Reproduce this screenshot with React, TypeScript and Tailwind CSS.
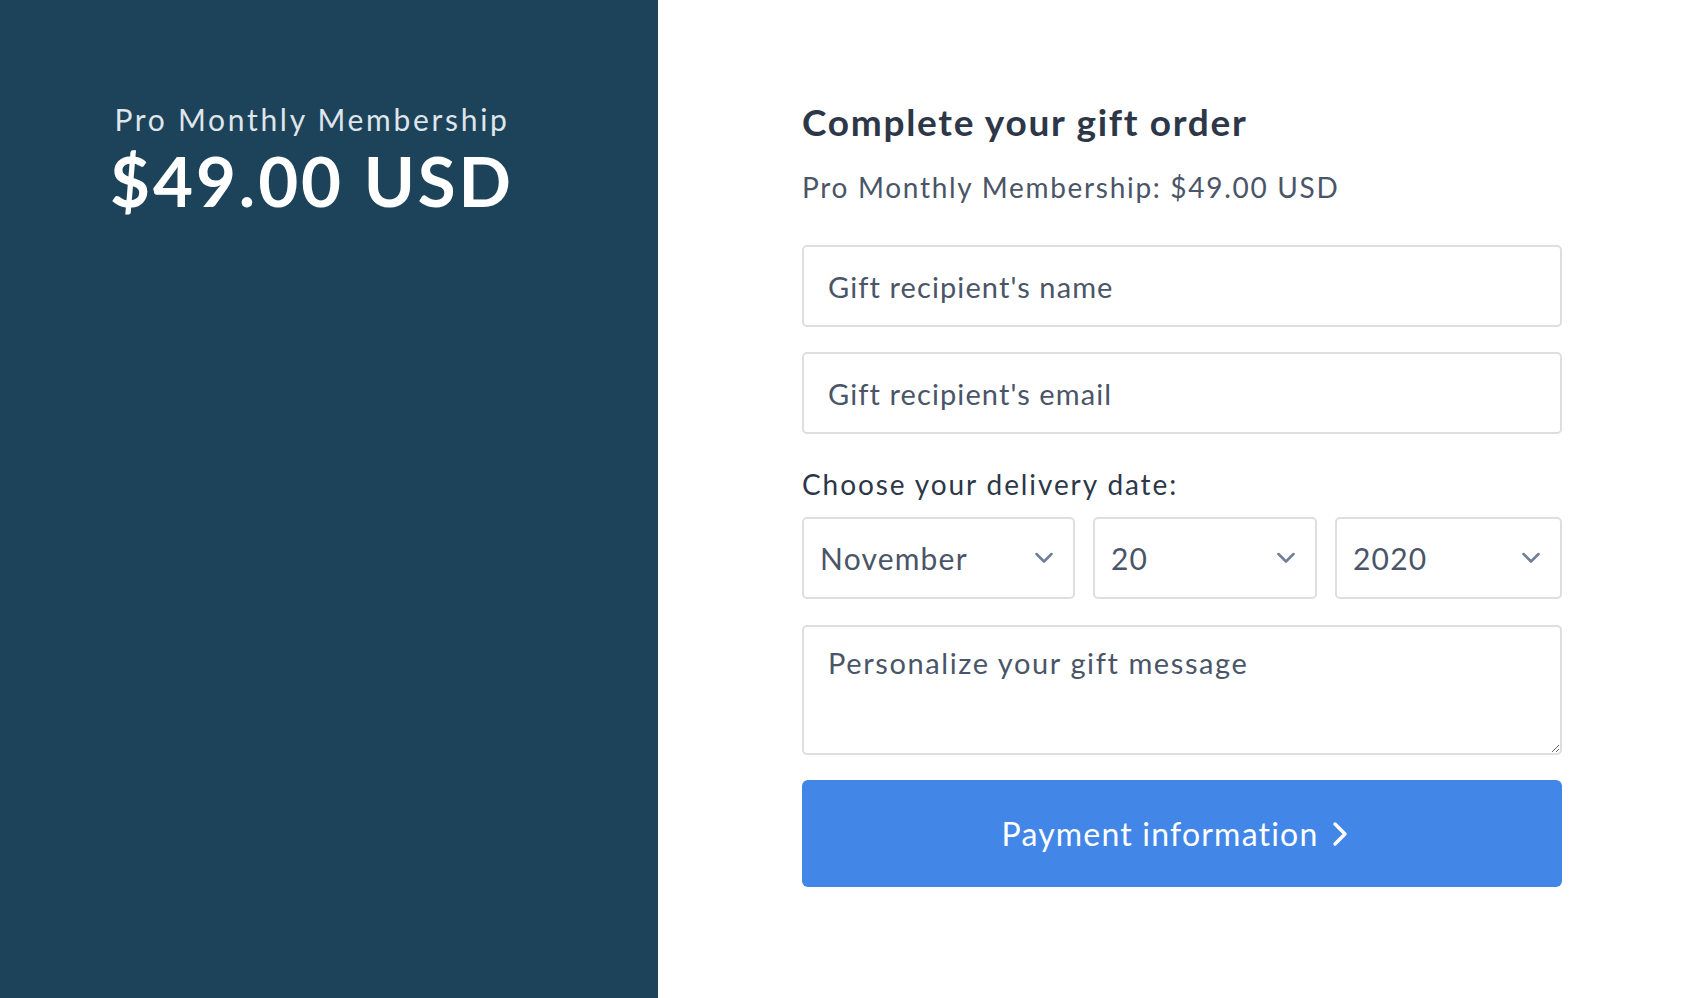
import { ChangeEvent, useState } from "react";

const months = [
  "January",
  "February",
  "March",
  "April",
  "May",
  "June",
  "July",
  "August",
  "September",
  "October",
  "November",
  "December",
];

const days = Array.from({ length: 31 }, (_, i) => String(i + 1));
const years = ["2020", "2021", "2022"];

function SelectChevron() {
  return (
    <svg
      width="18"
      height="11"
      viewBox="0 0 18 11"
      fill="none"
      className="pointer-events-none absolute right-[22px] top-1/2 -translate-y-1/2"
    >
      <polyline
        points="1.5,1.5 9,9 16.5,1.5"
        stroke="#718096"
        strokeWidth="2.6"
        strokeLinecap="round"
        strokeLinejoin="round"
      />
    </svg>
  );
}

function DateSelect({
  value,
  options,
  onChange,
  className,
}: {
  value: string;
  options: string[];
  onChange: (e: ChangeEvent<HTMLSelectElement>) => void;
  className: string;
}) {
  return (
    <div className={`relative ${className}`}>
      <select
        value={value}
        onChange={onChange}
        className="h-[82px] w-full appearance-none rounded-[5px] border-2 border-[#dedede] bg-white pl-[16px] pr-[48px] text-[30px] tracking-[1.2px] text-[#4a5568] outline-none"
      >
        {options.map((o) => (
          <option key={o} value={o}>
            {o}
          </option>
        ))}
      </select>
      <SelectChevron />
    </div>
  );
}

export default function App() {
  const [month, setMonth] = useState("November");
  const [day, setDay] = useState("20");
  const [year, setYear] = useState("2020");

  return (
    <div className="flex min-h-screen w-full font-['Lato',sans-serif]">
      <aside className="w-[658px] shrink-0 bg-[#1c4359] pl-[96px] pr-[130px] pt-[101px] text-center">
        <p className="text-[30px] leading-[36px] tracking-[2.7px] text-[#dfe5ea]">
          Pro Monthly Membership
        </p>
        <p className="mt-[8px] text-[69px] font-bold leading-[72px] tracking-[2.9px] text-white">
          $49.00 USD
        </p>
      </aside>

      <main className="flex-1 bg-white">
        <form
          className="ml-[144px] w-[760px] pt-[100px]"
          onSubmit={(e) => e.preventDefault()}
        >
          <h1 className="text-[37px] font-bold leading-[44px] tracking-[1.7px] text-[#2d3748]">
            Complete your gift order
          </h1>
          <p className="mt-[25px] text-[28px] leading-[36px] tracking-[1.7px] text-[#4a5568]">
            Pro Monthly Membership: $49.00 USD
          </p>

          <input
            type="text"
            placeholder="Gift recipient's name"
            className="mt-[40px] block h-[82px] w-full rounded-[5px] border-2 border-[#dedede] px-[24px] text-[29px] tracking-[1.1px] text-[#4a5568] outline-none placeholder:text-[#4a5568]"
          />
          <input
            type="email"
            placeholder="Gift recipient's email"
            className="mt-[25px] block h-[82px] w-full rounded-[5px] border-2 border-[#dedede] px-[24px] text-[29px] tracking-[1.1px] text-[#4a5568] outline-none placeholder:text-[#4a5568]"
          />

          <p className="mt-[32px] text-[28px] leading-[36px] tracking-[1.9px] text-[#2d3748]">
            Choose your delivery date:
          </p>
          <div className="mt-[15px] flex gap-[18px]">
            <DateSelect
              value={month}
              options={months}
              onChange={(e) => setMonth(e.target.value)}
              className="w-[273px]"
            />
            <DateSelect
              value={day}
              options={days}
              onChange={(e) => setDay(e.target.value)}
              className="w-[224px]"
            />
            <DateSelect
              value={year}
              options={years}
              onChange={(e) => setYear(e.target.value)}
              className="flex-1"
            />
          </div>

          <textarea
            placeholder="Personalize your gift message"
            className="mt-[26px] block h-[130px] w-full rounded-[5px] border-2 border-[#dedede] px-[24px] pt-[18px] text-[29px] leading-[36px] tracking-[1.6px] text-[#4a5568] outline-none placeholder:text-[#4a5568]"
          />

          <button
            type="submit"
            className="mt-[25px] flex h-[107px] w-full cursor-pointer items-center justify-center gap-[14px] rounded-[6px] bg-[#4287e8] pr-[14px] text-[32px] tracking-[1.2px] text-white"
          >
            <span>Payment information</span>
            <svg width="16" height="26" viewBox="0 0 16 26" fill="none">
              <polyline
                points="3,3 13,13 3,23"
                stroke="white"
                strokeWidth="3.4"
                strokeLinecap="round"
                strokeLinejoin="round"
              />
            </svg>
          </button>
        </form>
      </main>
    </div>
  );
}
